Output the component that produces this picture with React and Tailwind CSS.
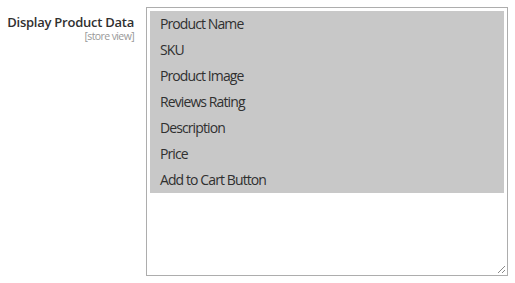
import React from 'react';

const options = [
  'Product Name',
  'SKU',
  'Product Image',
  'Reviews Rating',
  'Description',
  'Price',
  'Add to Cart Button',
];

const App = () => {
  return (
    <div className="w-[515px] h-[283px] bg-white pt-[7px] font-['Open_Sans',sans-serif] text-[#303030]">
      <div className="flex">
        {/* Field label */}
        <div className="w-[134px] pt-[9px] text-right whitespace-nowrap">
          <div className="text-[13px] font-semibold leading-[13px] tracking-[-0.25px]">Display Product Data</div>
          <div className="mt-[1px] text-[10.5px] leading-[12px] tracking-[-0.6px] text-[#999]">[store view]</div>
        </div>

        {/* Multiselect */}
        <div className="relative ml-[12px] w-[362px] h-[269px] border border-[#adadad] p-[3px]">
          {options.map((opt) => (
            <div key={opt} className="h-[26px] bg-[#c8c8c8] pl-[10px] text-[14px] leading-[26px] tracking-[-0.9px] text-[#303030]">
              {opt}
            </div>
          ))}
          {/* resize grip */}
          <svg className="absolute right-[1px] bottom-[1px]" width="9" height="9" viewBox="0 0 9 9">
            <line x1="1" y1="8" x2="8" y2="1" stroke="#8a8a8a" strokeWidth="1" />
            <line x1="5" y1="8" x2="8" y2="5" stroke="#8a8a8a" strokeWidth="1" />
          </svg>
        </div>
      </div>
    </div>
  );
};

export default App;
